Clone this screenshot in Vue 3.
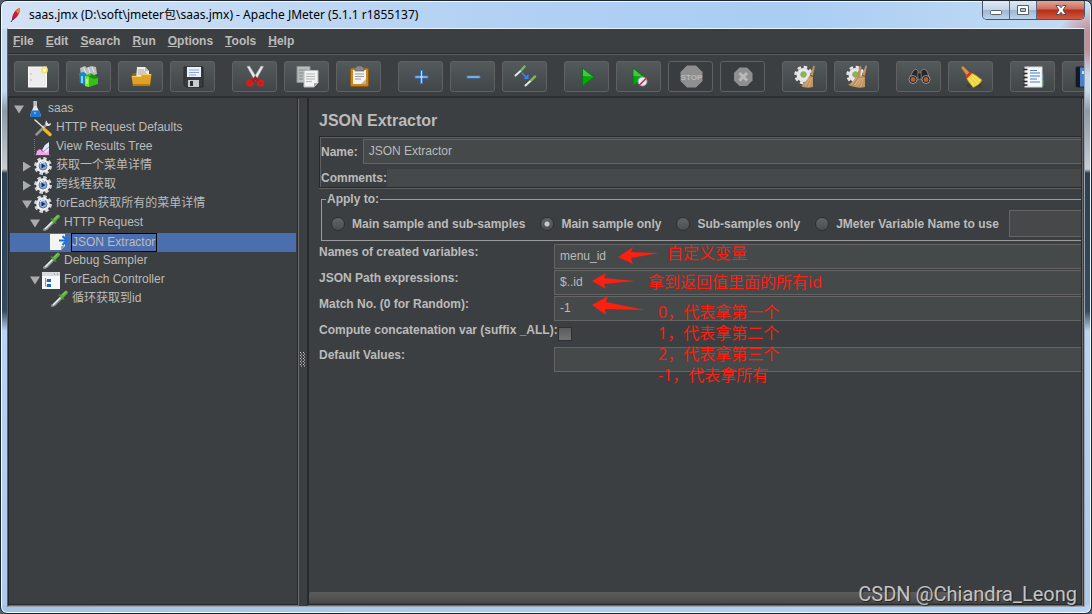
<script setup>
import { ref } from 'vue'

const menus = ['File', 'Edit', 'Search', 'Run', 'Options', 'Tools', 'Help']

const toolGroups = [
  ['New', 'Templates', 'Open', 'Save'],
  ['Cut', 'Copy', 'Paste'],
  ['Expand', 'Collapse', 'Toggle'],
  ['Start', 'StartNoPauses', 'Stop', 'Shutdown'],
  ['Clear', 'ClearAll'],
  ['Find', 'ResetFind'],
  ['FunctionHelper', 'Help'],
]
const disabledTools = ['Stop', 'Shutdown']

const tree = [
  { text: 'saas', level: 0, icon: 'flask', state: 'open' },
  { text: 'HTTP Request Defaults', level: 1, icon: 'tools' },
  { text: 'View Results Tree', level: 1, icon: 'chart' },
  { text: '获取一个菜单详情', level: 1, icon: 'gear', state: 'closed' },
  { text: '跨线程获取', level: 1, icon: 'gear', state: 'closed' },
  { text: 'forEach获取所有的菜单详情', level: 1, icon: 'gear', state: 'open' },
  { text: 'HTTP Request', level: 2, icon: 'dropper', state: 'open' },
  { text: 'JSON Extractor', level: 3, icon: 'extract', selected: true },
  { text: 'Debug Sampler', level: 2, icon: 'dropper' },
  { text: 'ForEach Controller', level: 2, icon: 'controller', state: 'open' },
  { text: '循环获取到id', level: 3, icon: 'dropper' },
]

const scopes = ['Main sample and sub-samples', 'Main sample only', 'Sub-samples only', 'JMeter Variable Name to use']
const scope = ref('Main sample only')
const name = ref('JSON Extractor')
const comments = ref('')
const variable = ref('')
const created = ref('menu_id')
const paths = ref('$..id')
const matchNo = ref('-1')
const concat = ref(false)
const defaults = ref('')
</script>

<template>
  <div class="window">
    <header class="titlebar">
      <svg class="feather" viewBox="0 0 12 16" aria-hidden="true">
        <path d="M2 12C2 8 5 3 9 1l1 1c0 4-3 9-7 11z" fill="#c9202f" />
        <path d="M6 4l3-3 1 1-2 5z" fill="#ee8a2a" />
        <path d="M2 12l2-4 1 3-2 2z" fill="#7a2a78" />
        <path d="M1 15l2-3" stroke="#333" />
      </svg>
      <h1 class="title">saas.jmx (D:\soft\jmeter包\saas.jmx) - Apache JMeter (5.1.1 r1855137)</h1>
      <div class="winbtns">
        <button class="wb" aria-label="Minimize"><svg viewBox="0 0 14 12"><rect x="1.500" y="6.500" width="11" height="4" rx="1" fill="#fff" stroke="#56616f" /></svg></button>
        <button class="wb" aria-label="Maximize"><svg viewBox="0 0 14 12"><path d="M1.500 1.500h11v9h-11z" fill="#fff" stroke="#56616f" /><path d="M4.500 4.500h5v3h-5z" fill="#a9c3df" stroke="#56616f" /></svg></button>
        <button class="wb close" aria-label="Close"><svg viewBox="0 0 14 12"><path d="M2 1.500h3.300L7 3.700l1.700-2.200H12L9 6l3 4.500H8.700L7 8.200l-1.700 2.300H2L5 6z" fill="#fff" stroke="#5b4a55" /></svg></button>
      </div>
    </header>

    <div class="client">
      <nav class="menubar">
        <button v-for="m in menus" :key="m" class="menu"><u>{{ m[0] }}</u>{{ m.slice(1) }}</button>
      </nav>

      <div class="toolbar" role="toolbar">
        <div v-for="(g, i) in toolGroups" :key="i" class="group">
          <button v-for="t in g" :key="t" class="tool" :aria-label="t" :disabled="disabledTools.includes(t)">
            <svg viewBox="0 0 24 24" aria-hidden="true">
              <g v-if="t === 'New'">
                <rect x="3.500" y="2" width="18" height="20" fill="#ececec" stroke="#fafafa" />
                <path d="M6 8v2M6 14v2" stroke="#bbb" />
                <circle cx="19.500" cy="5" r="3.500" fill="#f3e44a" opacity=".85" />
                <circle cx="19.500" cy="5" r="1.700" fill="#fffef0" />
              </g>
              <g v-else-if="t === 'Templates'">
                <path d="M3 3l5-2 2 2 4-2 5 1 1 7-8 3-8-1z" fill="#b9bdbf" />
                <path d="M6 2l3 6M11 2l2 6M15 2l2 5" stroke="#e6e8e8" />
                <path d="M2 8l5-1 3 3v11l-7-3z" fill="#148ac4" />
                <path d="M5 11v7" stroke="#b7e3f7" stroke-width="1.500" />
                <path d="M8 11l6-3 7 5v6l-9 3-4-1z" fill="#36bf17" />
                <path d="M8 11l4 1v10l-4-1z" fill="#82e436" />
                <path d="M10 14v5" stroke="#e5ffd0" />
                <path d="M12 12l3-3 6 4-4 1z" fill="#159007" />
              </g>
              <g v-else-if="t === 'Open'">
                <path d="M3 9l4-1h11l3 1v11H4z" fill="#9b6a0c" />
                <path d="M8 2h8l4 4v10H7z" fill="#efefef" />
                <path d="M16 2v4h4z" fill="#bbb" />
                <path d="M9 5h6M9 7h8M9 9h9" stroke="#a5a5a5" />
                <path d="M2.500 11h9l2-2h9L21 21H4z" fill="#dfa126" />
                <path d="M3 11.500h9l2-2h8" stroke="#f8d573" fill="none" />
                <path d="M4 20h17" stroke="#b77b10" stroke-width="2" />
              </g>
              <g v-else-if="t === 'Save'">
                <path d="M3 2h19v20H5l-2-2z" fill="#393b3e" stroke="#26282a" />
                <rect x="6" y="2" width="14" height="10" fill="#e9f1fa" />
                <path d="M8 5h10M8 7.500h10M8 10h7" stroke="#8ca8c8" />
                <rect x="7" y="15" width="11" height="7" fill="#c9cccf" />
                <rect x="9" y="16" width="3" height="5" fill="#2c2e30" />
              </g>
              <g v-else-if="t === 'Cut'">
                <path d="M4 1.500L6.500 1l8 13-3 1zM20.500 1.500L18 1l-8 13 3 1z" fill="#e8e9e9" stroke="#a2a5a6" stroke-width=".6" />
                <ellipse cx="7" cy="18" rx="2.500" ry="2.300" fill="none" stroke="#e01818" stroke-width="2.700" />
                <ellipse cx="17.500" cy="18" rx="2.500" ry="2.300" fill="none" stroke="#e01818" stroke-width="2.700" />
                <path d="M9 16l3.300-3 3.300 3" fill="none" stroke="#c41010" stroke-width="2.700" />
              </g>
              <g v-else-if="t === 'Copy'">
                <path d="M2 1.500h13v16H2z" fill="#b9bcbd" stroke="#8c9091" />
                <path d="M4 5h8M4 8h6M4 11h4M4 14h4" stroke="#858889" />
                <path d="M9 5.500h14V18l-4 4H9z" fill="#f2f2f2" stroke="#b8b8b8" />
                <path d="M11 9h9M11 11.500h9M11 14h9M11 16.500h6" stroke="#b5b5b5" />
                <path d="M23 18h-4v4z" fill="#aaa" />
              </g>
              <g v-else-if="t === 'Paste'">
                <rect x="3.500" y="3" width="18" height="18.500" rx="1.500" fill="#c8861f" stroke="#8e5b0e" />
                <path d="M6 5h13v14H6z" fill="#f3f3f3" />
                <path d="M8 3c1-1 2-1 2.500-2h4c.5 1 1.500 1 2.500 2v3H8z" fill="#85898a" stroke="#555" stroke-width=".6" />
                <path d="M8 9h9M8 11.500h9M8 14h6" stroke="#999" />
                <path d="M19 14l-5 5h5z" fill="#b5b5b5" />
              </g>
              <path v-else-if="t === 'Expand'" d="M11.500 5.500h2v5.500H19v2h-5.500v5.500h-2V13H6v-2h5.500z" fill="#b9dcfa" stroke="#3c78c2" />
              <path v-else-if="t === 'Collapse'" d="M6 11h13v2H6z" fill="#b9dcfa" stroke="#3c78c2" />
              <g v-else-if="t === 'Toggle'" stroke-linecap="round">
                <path d="M2.500 10.500L8 5.500M12.500 20.500l5.500-5" stroke="#e5e8e6" stroke-width="2" />
                <path d="M8.500 5l3-3.500M18.500 15l3.500-3.500" stroke="#78b45b" stroke-width="2.500" />
                <path d="M9 8l4 4" stroke="#3d82ea" stroke-width="1.500" stroke-dasharray="2 1" />
                <path d="M15.500 9v5h-5z" fill="#3d82ea" />
              </g>
              <g v-else-if="t === 'Start'">
                <path d="M7.500 3v18L19.500 12z" fill="#08a50c" stroke="#0a7410" />
                <path d="M8 4v7l9 .5z" fill="#4cbf4c" />
              </g>
              <g v-else-if="t === 'StartNoPauses'">
                <path d="M6 3v18l12-9z" fill="#08a50c" stroke="#0a7410" />
                <path d="M6.500 4v7l9 .5z" fill="#4cbf4c" />
                <circle cx="15.500" cy="16.500" r="4.500" fill="#e6edf6" stroke="#7fa0c5" />
                <path d="M12 20.500l8-8" stroke="#dc2a2a" stroke-width="1.700" />
              </g>
              <g v-else-if="t === 'Stop'">
                <path d="M8 .500h9l6.500 6.500v9L17 22.500H8L1.500 16V7z" fill="#8f8f8f" />
                <text x="12.500" y="15" text-anchor="middle" class="stoptext">STOP</text>
              </g>
              <g v-else-if="t === 'Shutdown'">
                <path d="M8.500 2.500h7.500l5.500 5.500v7.500L16 21H8.500L3 15.500V8z" fill="#8f8f8f" />
                <path d="M8.500 8l7.500 7.500M16 8l-7.500 7.500" stroke="#bababa" stroke-width="3" />
              </g>
              <g v-else-if="t === 'Clear' || t === 'ClearAll'">
                <circle cx="10.500" cy="10" r="7" fill="#e8e8e8" />
                <circle cx="10.500" cy="10" r="8" fill="none" stroke="#e8e8e8" stroke-width="2.500" stroke-dasharray="3.500 2.780" />
                <circle cx="10.500" cy="9.500" r="2.800" fill="#7bc52c" stroke="#9a9a9a" />
                <path v-if="t === 'ClearAll'" d="M15 1l1.500.5-1 8 1.500 12c-4 1-10 1-14-2 4-1 7-6 9-10z" fill="#b98d5e" />
                <path d="M20.500.500l1.500.500-2 9 0 12c-4 1-9 1-12-1 4-2 6-7 9-11z" fill="#bf9464" />
                <path d="M17 10l4 2" stroke="#744a25" />
                <path d="M17 13l-5 8M18.500 13l-3 9M15.500 13l-6 7" stroke="#e5bf8a" stroke-width=".7" />
                <path v-if="t === 'ClearAll'" d="M12 12l-6 8M14 13l-4 7" stroke="#e5bf8a" stroke-width=".7" />
              </g>
              <g v-else-if="t === 'Find'">
                <path d="M6 6l3-2 2 2v9H2zM14 6l3-2 3 2 3 9h-9z" fill="#262626" stroke="#9b9b9b" stroke-width=".7" />
                <path d="M11 8h3v6h-3z" fill="#222" stroke="#888" stroke-width=".5" />
                <circle cx="6" cy="14.500" r="4" fill="#1b1b1b" stroke="#b5b5b5" stroke-width=".8" />
                <circle cx="19" cy="14.500" r="4" fill="#1b1b1b" stroke="#b5b5b5" stroke-width=".8" />
                <circle cx="6" cy="14.500" r="2.500" fill="#b0622f" />
                <circle cx="19" cy="14.500" r="2.500" fill="#b0622f" />
              </g>
              <g v-else-if="t === 'ResetFind'">
                <ellipse cx="15" cy="20.500" rx="8" ry="2" fill="#333" opacity=".5" />
                <path d="M2 2.500L4 1l7 7-3 3z" fill="#d89446" stroke="#99612a" stroke-width=".7" />
                <path d="M11 8c4 0 8 4 12 7-2 4-5 6-9 7.500C12 19 8 16 7.500 12z" fill="#f0d43c" stroke="#b9981c" stroke-width=".6" />
                <path d="M12 11l7 8M10 13l5 8M14 10l7 6" stroke="#fff08b" stroke-width=".8" />
                <path d="M12 7.500L7 12.500" stroke="#dc3224" stroke-width="2.500" />
              </g>
              <g v-else-if="t === 'FunctionHelper'">
                <path d="M20 9h3v6h-3z" fill="#2468c5" />
                <path d="M20 15h3v6h-3z" fill="#25962d" />
                <rect x="4" y="2" width="17" height="20" fill="#f9f9f9" stroke="#d8d8d8" />
                <path d="M2.500 4.500h4M2.500 8.500h4M2.500 12.500h4M2.500 16.500h4M2.500 20h4" stroke="#262626" stroke-width="1.700" />
                <path d="M9 5.500h7M9 8h10M9 11h10M9 14h7M9 17h10" stroke="#477dc2" stroke-width="1.100" />
              </g>
              <g v-else-if="t === 'Help'">
                <rect x="3" y="2" width="19" height="20" rx="1" fill="#3f83d8" stroke="#1e2b3d" />
                <path d="M3 2h4v20H3z" fill="#17191d" />
                <path d="M9 6h3v3H9z" fill="#d5e6fb" />
              </g>
            </svg>
          </button>
        </div>
      </div>

      <div class="split">
        <ul class="tree" role="tree">
          <li v-for="n in tree" :key="n.text" role="treeitem" class="node" :class="['lv' + n.level, { selected: n.selected }]">
            <span class="twist" :class="n.state"></span>
            <svg class="nicon" viewBox="0 0 18 18" aria-hidden="true">
              <g v-if="n.icon === 'flask'">
                <path d="M7.500 1h3.500v6l4 8-1 2H5l-1-2 3.500-8z" fill="#e4e8ec" />
                <path d="M6 10.500h7L15 15l-1 2H5l-1-2z" fill="#1b76d4" />
                <path d="M8 1h3v5H8z" fill="#b9bfc4" />
                <circle cx="9" cy="13" r="1" fill="#91c5f7" />
              </g>
              <g v-else-if="n.icon === 'tools'" stroke-linecap="round">
                <path d="M2.500 15.500L13 5" stroke="#909496" stroke-width="2.500" />
                <path d="M12.500 1.500c-2 2-1 5 1 5.500s3.500-1 3.500-3l-2.500 1-1-1z" fill="#e4e6e6" />
                <path d="M1 1l9 8" stroke="#e5e5e5" stroke-width="1.500" />
                <path d="M10.500 10.500l5.500 5" stroke="#f1b614" stroke-width="3.500" />
              </g>
              <g v-else-if="n.icon === 'chart'">
                <path d="M.500 1v16H17" fill="none" stroke="#73777b" stroke-dasharray="1 1" />
                <path d="M2 17l1-4 3-2 3 2 6-6v10z" fill="#f4a6e4" />
                <path d="M8 12l3-5 4-3v8l-3 3z" fill="#dce9fa" />
                <path d="M2 13l4-2 3 3 6-5" fill="none" stroke="#c83da9" stroke-width=".7" />
              </g>
              <g v-else-if="n.icon === 'gear'">
                <circle cx="9" cy="9" r="7.400" fill="none" stroke="#d4d6d7" stroke-width="3" stroke-dasharray="3.400 2.410" />
                <circle cx="9" cy="9" r="5.500" fill="#a9bddb" stroke="#eceeef" stroke-width="2.600" />
                <circle cx="9" cy="9" r="4" fill="#8fabd6" stroke="#4b6690" stroke-width=".7" />
                <path d="M7.500 6.500v5l4-2.500z" fill="#132f5c" />
                <path d="M6 7c1-2 3-2 5-1" stroke="#eef5ff" fill="none" />
              </g>
              <g v-else-if="n.icon === 'dropper'" stroke-linecap="round">
                <path d="M2.500 15.500l2-1 7-7" stroke="#8e9496" stroke-width="3" fill="none" />
                <path d="M3.500 14.500l7.500-7.500" stroke="#eef1ef" stroke-width="1.500" />
                <path d="M9.500 5l4 4" stroke="#3d8428" stroke-width="2" />
                <path d="M12 6.500l4-4" stroke="#5db13b" stroke-width="3.700" />
                <path d="M12.500 5l3-3" stroke="#a6df84" stroke-width=".8" />
              </g>
              <g v-else-if="n.icon === 'extract'">
                <path d="M0 1h15v12l-4 4H0z" fill="#f4f4f4" />
                <path d="M15 13h-4v4z" fill="#9ca3ac" />
                <path d="M9 7.500h7" stroke="#126fd2" stroke-width="2" />
                <path d="M12.500 3l4.500 4.500-4.500 4.500" fill="none" stroke="#1676df" stroke-width="2.200" />
              </g>
              <g v-else>
                <rect width="18" height="17" y="1" fill="#f7f8f9" />
                <path d="M0 1h18v4H0z" fill="#d8dadd" />
                <path d="M12 3h1M15 3h1" stroke="#888" />
                <path d="M3.500 7v8h2M3.500 10h2" fill="none" stroke="#7696bd" />
                <path d="M5 8h4v3H5zM5 13h4v3H5z" fill="#1768bf" />
              </g>
            </svg>
            <span class="ntext">{{ n.text }}</span>
          </li>
        </ul>

        <div class="divider">
          <svg viewBox="0 0 6 16" aria-hidden="true">
            <path d="M0 1.500h5M0 4.500h5M0 7.500h5M0 10.500h5M0 13.500h5" stroke="#c5c7c8" stroke-dasharray="1 2" />
            <path d="M1 3h5M1 6h5M1 9h5M1 12h5M1 15h5" stroke="#c5c7c8" stroke-dasharray="1 2" />
          </svg>
        </div>

        <main class="panel">
          <h2 class="heading">JSON Extractor</h2>
          <div class="namebox">
            <div class="namerow">
              <label for="name">Name:</label>
              <input id="name" v-model="name" class="field" type="text" />
            </div>
            <div class="commentrow">
              <label for="comments">Comments:</label>
              <input id="comments" v-model="comments" class="plain" type="text" />
            </div>
          </div>

          <fieldset class="apply">
            <legend>Apply to:</legend>
            <div class="scopes">
              <label v-for="s in scopes" :key="s" class="scope"><input v-model="scope" type="radio" name="scope" :value="s" />{{ s }}</label>
              <input v-model="variable" class="field varname" type="text" aria-label="Variable name" />
            </div>
          </fieldset>

          <div class="form">
            <label for="created">Names of created variables:</label>
            <input id="created" v-model="created" class="field" type="text" />
            <label for="paths">JSON Path expressions:</label>
            <input id="paths" v-model="paths" class="field" type="text" />
            <label for="match">Match No. (0 for Random):</label>
            <input id="match" v-model="matchNo" class="field" type="text" />
            <label for="concat">Compute concatenation var (suffix _ALL):</label>
            <input id="concat" v-model="concat" class="check" type="checkbox" />
            <label for="defaults">Default Values:</label>
            <input id="defaults" v-model="defaults" class="field" type="text" />
          </div>

          <div class="hscroll"></div>

          <svg class="arrows" viewBox="0 0 60 80" aria-hidden="true">
            <g fill="#fb2010">
              <path d="M26 14L41 4l-2 5 28 1-28 5 2 6z" />
              <path d="M0 38l14-8-2 5 31 3-31 3 2 5z" />
              <path d="M0 62l16-9-2 6 39 8-40-1 1 6z" />
            </g>
          </svg>
          <p class="note n1">自定义变量</p>
          <p class="note n2">拿到返回值里面的所有id</p>
          <p class="note n3">0，代表拿第一个<br />1，代表拿第二个<br />2，代表拿第三个<br />-1，代表拿所有</p>
        </main>
      </div>
    </div>
    <p class="watermark">CSDN @Chiandra_Leong</p>
  </div>
</template>

<style>
body { background: #56606c; }
</style>

<style scoped>
* { box-sizing: border-box; margin: 0; }
button, input { font: inherit; color: inherit; }
.window {
  position: relative;
  display: flex;
  flex-direction: column;
  height: 100vh;
  padding: 0 6px 6px;
  border: 1px solid #1d252e;
  border-radius: 7px;
  box-shadow: inset 0 0 0 1px #f4f9ff;
  overflow: hidden;
  background:
    radial-gradient(circle at 100% 40px, #c98c93 0, #c98c93 10px, transparent 34px) no-repeat,
    linear-gradient(90deg, #d3e2f4, #b2d1f3 45%, #a9cdf3 72%, #c4dcf4) top / 100% 28px no-repeat,
    linear-gradient(90deg, #a4c4e6, #b4d5fa) bottom / 100% 8px no-repeat,
    linear-gradient(#c4daf2 0, #c4daf2 90px, #8d9aa8 110px, #c9cdd1 168px, #2c3f53 172px, #34495e 310px, #b5d4f6 330px, #abcaec);
  color: #bbb;
  font: 12px/16px "Liberation Sans", "Noto Sans CJK SC", sans-serif;
}
.titlebar { display: flex; height: 27px; flex: none; padding-left: 3px; }
.feather { width: 12px; height: 16px; margin-top: 6px; }
.title { flex: 1; margin-left: 7px; padding-top: 5px; color: #000; font: 12px/18px "Noto Sans", "Noto Sans CJK SC", sans-serif; white-space: nowrap; }
.winbtns { display: flex; height: 19px; border: 1px solid #49566a; border-top: 0; border-radius: 0 0 5px 5px; overflow: hidden; }
.wb { display: flex; justify-content: center; align-items: center; width: 27px; padding: 0; border: 0; border-right: 1px solid #59697d; background: linear-gradient(#dfe9f4, #c3d4e7 48%, #9eb6d0 50%, #bdd3ea); }
.wb svg { width: 14px; height: 12px; }
.close { width: 47px; border-right: 0; background: linear-gradient(#e4a597, #cf6a57 45%, #b32d18 50%, #cf5a3f); }
.client { display: flex; flex-direction: column; flex: 1; min-height: 0; border: 1px solid; border-color: #e9f2fb #9aa3ab #9aa3ab #59636d; background: #3c3f41; overflow: hidden; }
.menubar { display: flex; gap: 12px; flex: none; height: 26px; padding: 3px 5px; border-bottom: 1px solid #5b5d5e; box-shadow: inset 0 -1px #2a2d2f; font-weight: bold; }
.menu { padding: 0 0 2px; border: 0; background: none; }
.toolbar { display: flex; gap: 17px; flex: none; height: 43px; padding: 6px; border-bottom: 2px solid #2b2d2f; overflow: hidden; }
.group { display: flex; gap: 7px; }
.tool { display: flex; justify-content: center; align-items: center; flex: none; width: 45px; height: 31px; padding: 0; border: 1px solid #5f6263; border-radius: 3px; background: linear-gradient(#54595b, #414648); }
.tool:disabled { background: #3a3d3f; }
.tool svg { width: 24px; height: 24px; }
.stoptext { font: bold 8px "Liberation Sans", sans-serif; fill: #b9b9b9; }
.split { display: flex; flex: 1; min-height: 0; }
.tree { flex: none; width: 290px; margin-bottom: 1px; padding: 2px 1px 0; list-style: none; border: solid #27292b; border-width: 0 1px 1px; box-shadow: 1px 1px #6a6c6d; }
.node { display: flex; align-items: center; height: 19px; }
.lv0 { padding-left: 4px; }
.lv1 { padding-left: 12px; }
.lv2 { padding-left: 20px; }
.lv3 { padding-left: 28px; }
.selected { background: #4b6eaf; }
.twist { flex: none; width: 12px; height: 10px; background: #a9abac; clip-path: polygon(0 0, 0 0, 0 0); }
.open { clip-path: polygon(0 1px, 10px 1px, 5px 9px); }
.closed { clip-path: polygon(1px 0, 9px 5px, 1px 10px); }
.nicon { flex: none; width: 18px; height: 18px; margin: 0 3px 2px 0; }
.ntext { padding: 0 1px 2px; line-height: 17px; white-space: nowrap; }
.selected .ntext { border: 1px solid #000; padding: 0 1px 1px 0; line-height: 16px; }
.divider { display: flex; align-items: center; flex: none; width: 9px; padding-left: 2px; }
.divider svg { width: 6px; height: 16px; margin-top: 14px; }
.panel { position: relative; display: flex; flex-direction: column; flex: 1; min-width: 0; margin: 0 2px 1px 0; padding: 12px 0 1px 10px; border: 1px solid #27292b; border-left-width: 2px; border-top: 0; box-shadow: 1px 1px #6a6c6d; overflow: hidden; }
.heading { font-size: 16px; line-height: 22px; }
.namebox { margin-top: 4px; border: solid #27292b; border-width: 1px 0 1px 1px; box-shadow: inset 1px 1px #5e6061, 0 1px #5e6061; padding: 2px 0 0 1px; font-weight: bold; }
.namerow { display: flex; align-items: center; gap: 5px; }
.commentrow { display: flex; align-items: center; height: 19px; margin-top: 4px; }
.field { min-width: 0; width: 100%; height: 25px; padding: 0 5px 2px; border: 1px solid #646464; border-right: 0; border-radius: 0; background: #45494a; font-weight: normal; outline: 0; }
.plain { flex: 1; min-width: 0; height: 18px; border: 0; background: #45494a; outline: 0; }
.apply { min-width: 0; margin: 3px 0 0 2px; padding: 0; border: 1px solid #9a9b9c; border-right: 0; font-weight: bold; }
.apply legend { margin-left: 4px; padding: 0 1px; line-height: 16px; }
.scopes { display: flex; align-items: center; gap: 15px; height: 33px; padding-left: 9px; white-space: nowrap; }
.scope { display: flex; align-items: center; gap: 7px; flex: none; }
.scope input { appearance: none; width: 14px; height: 14px; margin: 0; border: 1px solid #2d2f31; border-radius: 50%; background: linear-gradient(#626566, #4b4e50); }
.scope input:checked { background: radial-gradient(circle, #c9c9c9 0, #c9c9c9 2px, transparent 3px), linear-gradient(#626566, #4b4e50); }
.varname { flex: 1; height: 27px; margin-left: -5px; }
.form { display: grid; grid-template-columns: 235px 1fr; row-gap: 1px; margin-top: 3px; font-weight: bold; white-space: nowrap; }
.check { appearance: none; width: 14px; height: 14px; margin: 5px 0 5px 4px; border: 1px solid #2d2f31; background: linear-gradient(#5b5b5b, #737373); }
.hscroll { width: 92%; height: 11px; margin: auto 0 0 -10px; border-radius: 2px; background: linear-gradient(#5d5c5c, #494949); }
.arrows { position: absolute; left: 283px; top: 145px; width: 60px; height: 80px; overflow: visible; }
.note { position: absolute; color: #fb2010; font: 16px/21px "Noto Sans", "Noto Sans CJK SC", sans-serif; white-space: nowrap; }
.n1 { left: 358px; top: 145px; }
.n2 { left: 339px; top: 174px; }
.n3 { left: 349px; top: 204px; }
.watermark { position: absolute; right: 14px; bottom: 7px; color: #c3c4c5; font: 20px/24px Roboto, sans-serif; text-shadow: 1px 1px 1px #222; }
</style>
